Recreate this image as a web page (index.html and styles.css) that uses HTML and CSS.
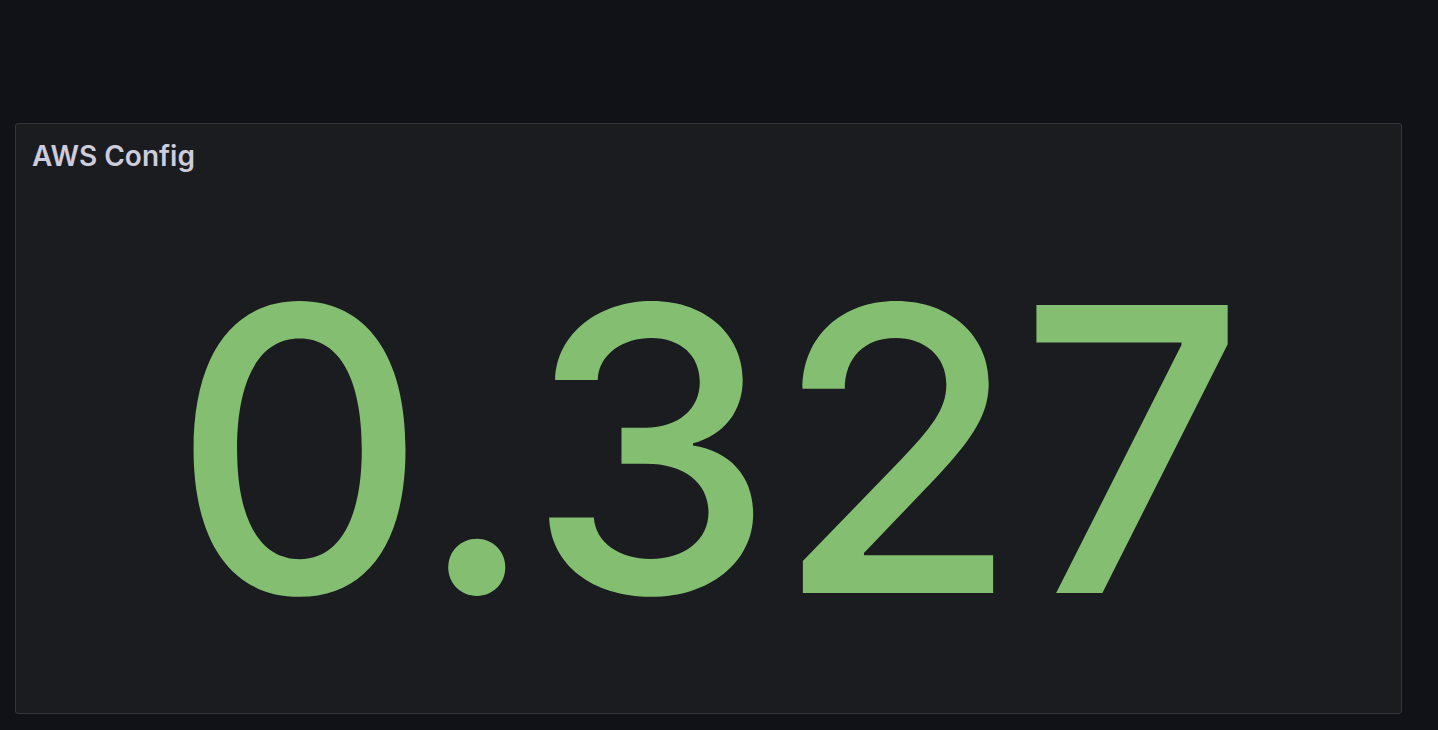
FILE: index.html
```html
<!DOCTYPE html>
<html lang="en">
<head>
  <meta charset="UTF-8" />
  <meta name="viewport" content="width=device-width, initial-scale=1.0"/>
  <title>AWS Config</title>
  <link rel="stylesheet" href="styles.css">
</head>
<body>
  <div class="dashboard">
    <div class="panel">
      <div class="panel-header">
        <h2 class="panel-title">AWS Config</h2>
      </div>
      <div class="panel-body">
        <span class="stat-value">0.327</span>
      </div>
    </div>
  </div>
</body>
</html>
```

FILE: styles.css
```css
* {
  margin: 0;
  padding: 0;
  box-sizing: border-box;
  font-family: Inter, "Noto Sans", sans-serif;
}

body, html {
  height: 100%;
  width: 100%;
}

body {
  background: #111217;
  overflow: hidden;
}

.dashboard {
  padding: 123px 36px 0 15px;
}

.panel {
  height: 591px;
  background: #1b1c20;
  border: 1px solid #33353a;
  border-radius: 3px;
  display: flex;
  flex-direction: column;
}

.panel-header {
  padding: 14px 16px 0 16px;
  height: 60px;
}

.panel-title {
  font-size: 28px;
  font-weight: 600;
  color: #ccccdc;
  line-height: 36px;
}

.panel-body {
  flex: 1;
  display: flex;
  justify-content: center;
  align-items: center;
}

.stat-value {
  font-size: 396px;
  font-weight: 500;
  color: #84bf71;
  line-height: 1;
}
```
